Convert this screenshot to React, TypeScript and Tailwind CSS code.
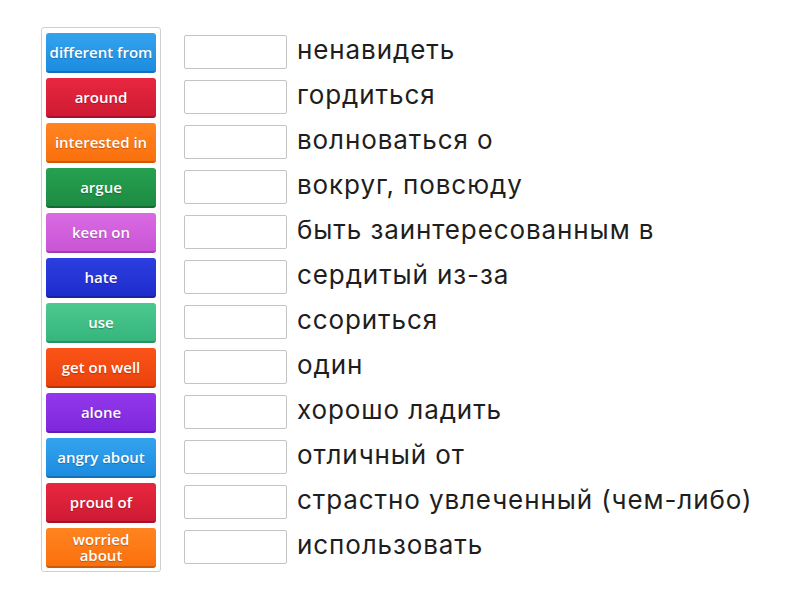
import React from 'react';

interface Tile {
  label: string;
  color: string;
}

const tiles: Tile[] = [
  { label: 'different from', color: 'bg-gradient-to-b from-[#34a3ee] to-[#1c8ce0] border-b-[#1570b8]' },
  { label: 'around', color: 'bg-gradient-to-b from-[#e8273f] to-[#cf1a33] border-b-[#a31226]' },
  { label: 'interested in', color: 'bg-gradient-to-b from-[#ff8420] to-[#fa700c] border-b-[#cc5a06]' },
  { label: 'argue', color: 'bg-gradient-to-b from-[#26a150] to-[#1d8b43] border-b-[#156a32]' },
  { label: 'keen on', color: 'bg-gradient-to-b from-[#da6ae2] to-[#c955d6] border-b-[#a03eab]' },
  { label: 'hate', color: 'bg-gradient-to-b from-[#2c3ee0] to-[#1f2ccc] border-b-[#1822a0]' },
  { label: 'use', color: 'bg-gradient-to-b from-[#4cc98f] to-[#35b57c] border-b-[#2a9163]' },
  { label: 'get on well', color: 'bg-gradient-to-b from-[#fa5418] to-[#ec410b] border-b-[#bb3207]' },
  { label: 'alone', color: 'bg-gradient-to-b from-[#9338ec] to-[#7f27dc] border-b-[#641cb0]' },
  { label: 'angry about', color: 'bg-gradient-to-b from-[#34a3ee] to-[#1c8ce0] border-b-[#1570b8]' },
  { label: 'proud of', color: 'bg-gradient-to-b from-[#e8273f] to-[#cf1a33] border-b-[#a31226]' },
  { label: 'worried\nabout', color: 'bg-gradient-to-b from-[#ff8420] to-[#fa700c] border-b-[#cc5a06]' },
];

const answers = [
  'ненавидеть',
  'гордиться',
  'волноваться о',
  'вокруг, повсюду',
  'быть заинтересованным в',
  'сердитый из-за',
  'ссориться',
  'один',
  'хорошо ладить',
  'отличный от',
  'страстно увлеченный (чем-либо)',
  'использовать',
];

const App: React.FC = () => {
  return (
    <div className="w-[800px] h-[600px] bg-white flex items-start pl-[41px] pt-[27px]">
      {/* Tile bank */}
      <div className="w-[120px] border border-[#cfcfcf] rounded-[3px] pt-[5px] pb-[3px] px-[4px] flex flex-col gap-[5px]">
        {tiles.map((tile) => (
          <div
            key={tile.label}
            className={`h-[40px] rounded-[3px] border-b-2 flex items-center justify-center text-center px-[3px] ${tile.color}`}
          >
            <span
              className="text-white text-[15px] leading-[16px] font-semibold whitespace-pre-line [text-shadow:0_1px_1px_rgba(0,0,0,0.25)]"
              style={{ fontFamily: '"Open Sans", sans-serif' }}
            >
              {tile.label}
            </span>
          </div>
        ))}
      </div>

      {/* Answer rows */}
      <div className="ml-[23px] mt-[8px] flex flex-col">
        {answers.map((text) => (
          <div key={text} className="h-[45px] flex items-start">
            <div className="w-[103px] h-[34px] border border-[#c4c4c4] rounded-[2px] bg-white" />
            <span
              className="ml-[10px] text-[26px] leading-[30px] tracking-[0.9px] text-[#1e1e1e] whitespace-nowrap"
              style={{ fontFamily: 'Inter, sans-serif' }}
            >
              {text}
            </span>
          </div>
        ))}
      </div>
    </div>
  );
};

export default App;
